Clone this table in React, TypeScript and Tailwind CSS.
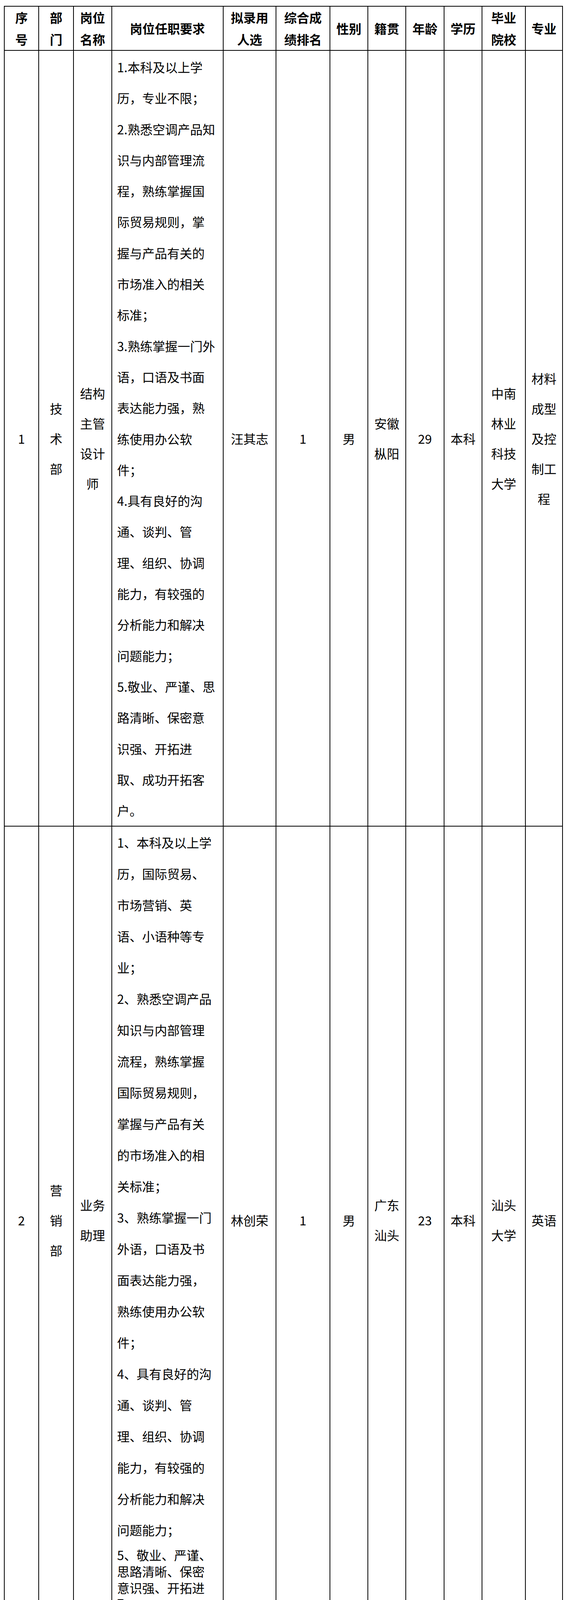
const headers: { label: string; w: string }[] = [
  { label: "序号", w: "w-[88px]" },
  { label: "部门", w: "w-[89px]" },
  { label: "岗位名称", w: "w-[97.5px]" },
  { label: "岗位任职要求", w: "w-[285.5px]" },
  { label: "拟录用人选", w: "w-[135px]" },
  { label: "综合成绩排名", w: "w-[138px]" },
  { label: "性别", w: "w-[97px]" },
  { label: "籍贯", w: "w-[97px]" },
  { label: "年龄", w: "w-[98px]" },
  { label: "学历", w: "w-[97px]" },
  { label: "毕业院校", w: "w-[111px]" },
  { label: "专业", w: "w-[95px]" },
];

type Row = {
  no: string;
  dept: string;
  title: string;
  lines: string[];
  tail?: string[];
  name: string;
  rank: string;
  gender: string;
  origin: string;
  age: string;
  degree: string;
  school: string;
  major: string;
};

// line breaks follow the source document's narrow column
const rows: Row[] = [
  {
    no: "1",
    dept: "技术部",
    title: "结构主管设计师",
    lines: [
      "1.本科及以上学",
      "历，专业不限；",
      "2.熟悉空调产品知",
      "识与内部管理流",
      "程，熟练掌握国",
      "际贸易规则，掌",
      "握与产品有关的",
      "市场准入的相关",
      "标准；",
      "3.熟练掌握一门外",
      "语，口语及书面",
      "表达能力强，熟",
      "练使用办公软",
      "件；",
      "4.具有良好的沟",
      "通、谈判、管",
      "理、组织、协调",
      "能力，有较强的",
      "分析能力和解决",
      "问题能力；",
      "5.敬业、严谨、思",
      "路清晰、保密意",
      "识强、开拓进",
      "取、成功开拓客",
      "户。",
    ],
    name: "汪其志",
    rank: "1",
    gender: "男",
    origin: "安徽枞阳",
    age: "29",
    degree: "本科",
    school: "中南林业科技大学",
    major: "材料成型及控制工程",
  },
  {
    no: "2",
    dept: "营销部",
    title: "业务助理",
    lines: [
      "1、本科及以上学",
      "历，国际贸易、",
      "市场营销、英",
      "语、小语种等专",
      "业；",
      "2、熟悉空调产品",
      "知识与内部管理",
      "流程，熟练掌握",
      "国际贸易规则，",
      "掌握与产品有关",
      "的市场准入的相",
      "关标准；",
      "3、熟练掌握一门",
      "外语，口语及书",
      "面表达能力强，",
      "熟练使用办公软",
      "件；",
      "4、具有良好的沟",
      "通、谈判、管",
      "理、组织、协调",
      "能力，有较强的",
      "分析能力和解决",
      "问题能力；",
    ],
    tail: ["5、敬业、严谨、", "思路清晰、保密", "意识强、开拓进", "取。"],
    name: "林创荣",
    rank: "1",
    gender: "男",
    origin: "广东汕头",
    age: "23",
    degree: "本科",
    school: "汕头大学",
    major: "英语",
  },
];

const cell = "border-2 border-black px-[14px] text-center align-middle leading-[77px]";

export default function App() {
  return (
    <div className="min-h-[4144px] bg-white pt-[15px] pl-[10px] font-['Noto_Sans_CJK_SC','Noto_Sans',sans-serif] text-[32px] text-black [text-spacing-trim:space-all]">
      <table className="w-[1429.5px] table-fixed border-collapse">
        <colgroup>
          {headers.map((h) => (
            <col key={h.label} className={h.w} />
          ))}
        </colgroup>
        <thead>
          <tr>
            {headers.map((h) => (
              <th key={h.label} className="border-2 border-black px-[14px] py-0 text-center align-middle font-bold leading-[55.5px]">
                {h.label}
              </th>
            ))}
          </tr>
        </thead>
        <tbody>
          {rows.map((r, i) => (
            <tr key={r.no}>
              <td className={cell}>{r.no}</td>
              <td className={cell}>{r.dept}</td>
              <td className={cell}>{r.title}</td>
              <td
                className={`border-2 border-black pl-[13px] pr-[10px] text-left align-top whitespace-nowrap ${
                  i === 0 ? "pt-[2px]" : "pt-0 pb-[3px]"
                }`}
              >
                {r.lines.map((t, k) => (
                  <div
                    key={k}
                    className={i === 0 ? "h-[79.3px] leading-[79.3px]" : "h-[80px] leading-[80px]"}
                  >
                    {t}
                  </div>
                ))}
                {r.tail && (
                  <div className="mt-[3px]">
                    {r.tail.map((t, k) => (
                      <div key={k} className="h-[42px] leading-[42px]">
                        {t}
                      </div>
                    ))}
                  </div>
                )}
              </td>
              <td className={cell}>{r.name}</td>
              <td className={cell}>{r.rank}</td>
              <td className={cell}>{r.gender}</td>
              <td className={cell}>{r.origin}</td>
              <td className={cell}>{r.age}</td>
              <td className={cell}>{r.degree}</td>
              <td className={cell}>{r.school}</td>
              <td className={cell}>{r.major}</td>
            </tr>
          ))}
        </tbody>
      </table>
    </div>
  );
}
